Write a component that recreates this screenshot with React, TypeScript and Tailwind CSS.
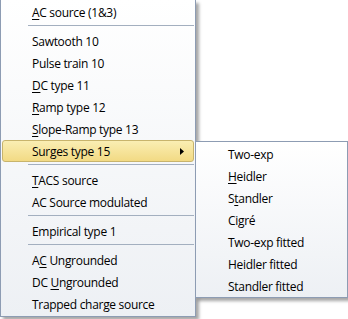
import React from "react";

type Entry = { label: React.ReactNode; sub?: boolean; active?: boolean } | "sep";

const u = (ch: string) => <span className="underline underline-offset-2">{ch}</span>;

const main: Entry[] = [
  { label: <>{u("A")}C source (1&amp;3)</> },
  "sep",
  { label: "Sawtooth 10" },
  { label: "Pulse train 10" },
  { label: <>{u("D")}C type 11</> },
  { label: <>{u("R")}amp type 12</> },
  { label: <>{u("S")}lope-Ramp type 13</> },
  { label: "Surges type 15", sub: true, active: true },
  "sep",
  { label: <>{u("T")}ACS source</> },
  { label: "AC Source modulated" },
  "sep",
  { label: "Empirical type 1" },
  "sep",
  { label: <>A{u("C")} Ungrounded</> },
  { label: <>DC {u("U")}ngrounded</> },
  { label: "Trapped charge source" },
];

const surges: React.ReactNode[] = [
  "Two-exp",
  <>{u("H")}eidler</>,
  <>S{u("t")}andler</>,
  "Cigré",
  "Two-exp fitted",
  "Heidler fitted",
  "Standler fitted",
];

function Row({ entry }: { entry: Exclude<Entry, "sep"> }) {
  return (
    <div
      className={
        "mx-[1px] flex h-[22px] items-center rounded-[3px] border pl-[29px] pr-2 " +
        (entry.active
          ? "border-[#c8b46c] bg-[linear-gradient(#faeeb3,#f2da84)]"
          : "border-transparent")
      }
    >
      <span className="flex-1 whitespace-nowrap pt-px">{entry.label}</span>
      {entry.sub && (
        <svg width="4" height="7" viewBox="0 0 4 7" className="mr-[1px]">
          <path d="M0 0L4 3.5L0 7Z" fill="#000" />
        </svg>
      )}
    </div>
  );
}

export default function App() {
  return (
    <div className="relative h-[319px] w-[348px] overflow-hidden bg-white font-['Open_Sans','Noto_Sans',sans-serif] text-[12px] leading-none tracking-[-0.3px] text-black">
      {/* main popup */}
      <div className="h-[317px] w-[196px] border-x border-b border-[#8d9cb3] bg-[linear-gradient(#ffffff,#edf0f4)] pt-[1px] shadow-[3px_3px_3px_rgba(0,0,0,0.35)]">
        {main.map((e, i) =>
          e === "sep" ? (
            <div key={i} className="h-[7px] pl-[27px] pr-[1px] pt-[2px]">
              <div className="h-px bg-[#a3afbf]" />
            </div>
          ) : (
            <Row key={i} entry={e} />
          )
        )}
      </div>

      {/* cascade for Surges type 15 */}
      <div className="absolute left-[195px] top-[141px] h-[157px] w-[153px] border border-[#8d9cb3] bg-[linear-gradient(#ffffff,#edf0f4)] pt-[1px] shadow-[3px_3px_3px_rgba(0,0,0,0.35)]">
        {surges.map((s, i) => (
          <div key={i} className="flex h-[22px] items-center whitespace-nowrap pl-[32px] pt-px">
            {s}
          </div>
        ))}
      </div>
    </div>
  );
}
